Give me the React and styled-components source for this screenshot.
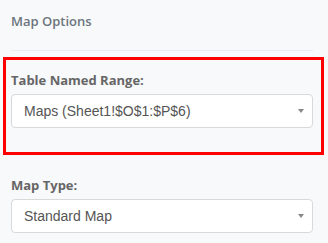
import React from 'react';
import styled, { createGlobalStyle } from 'styled-components';

const GlobalStyle = createGlobalStyle`
  html, body {
    margin: 0;
    padding: 0;
    background-color: #f8f9fa;
  }
`;

const Page = styled.div`
  width: 328px;
  height: 243px;
  box-sizing: border-box;
  padding: 0 15px 0 11px;
  font-family: 'Open Sans', 'Noto Sans', sans-serif;
  background-color: #f8f9fa;
  overflow: hidden;
`;

const Header = styled.h2`
  margin: 0;
  padding-top: 12px;
  height: 38px;
  font-size: 13px;
  line-height: 18px;
  font-weight: 600;
  color: #6c757d;
`;

const Divider = styled.hr`
  margin: 0 0 6px;
  border: 0;
  height: 1px;
  background-color: #e9ecef;
`;

const Highlight = styled.section`
  margin: 0 -11px 0 -8px;
  padding: 11px 8px 24px 5px;
  border: 3px solid #ff0000;
`;

const Field = styled.div`
  padding-top: ${({ $top }) => $top || 0}px;
`;

const Label = styled.label`
  display: block;
  margin-bottom: 5px;
  font-size: 13px;
  line-height: 18px;
  font-weight: 700;
  color: #666;
`;

const Select = styled.div`
  height: 34px;
  box-sizing: border-box;
  padding: 0 12px;
  display: flex;
  align-items: center;
  background-color: #fff;
  border: 1px solid #d9d9d9;
  border-radius: 4px;
  font-family: 'Liberation Sans', Arial, sans-serif;
  font-size: 14px;
  color: #555;
`;

const Arrow = styled.span`
  margin-left: auto;
  width: 0;
  height: 0;
  border-left: 3px solid transparent;
  border-right: 3px solid transparent;
  border-top: 4px solid #888;
  margin-right: -4px;
`;

const Dropdown = ({ label, value }) => (
  <>
    <Label>{label}</Label>
    <Select>
      {value}
      <Arrow />
    </Select>
  </>
);

const App = () => {
  return (
    <>
      <GlobalStyle />
      <Page>
        <Header>Map Options</Header>
        <Divider />
        <Highlight>
          <Dropdown label='Table Named Range:' value='Maps (Sheet1!$O$1:$P$6)' />
        </Highlight>
        <Field $top={21}>
          <Dropdown label='Map Type:' value='Standard Map' />
        </Field>
      </Page>
    </>
  );
};

export default App;
